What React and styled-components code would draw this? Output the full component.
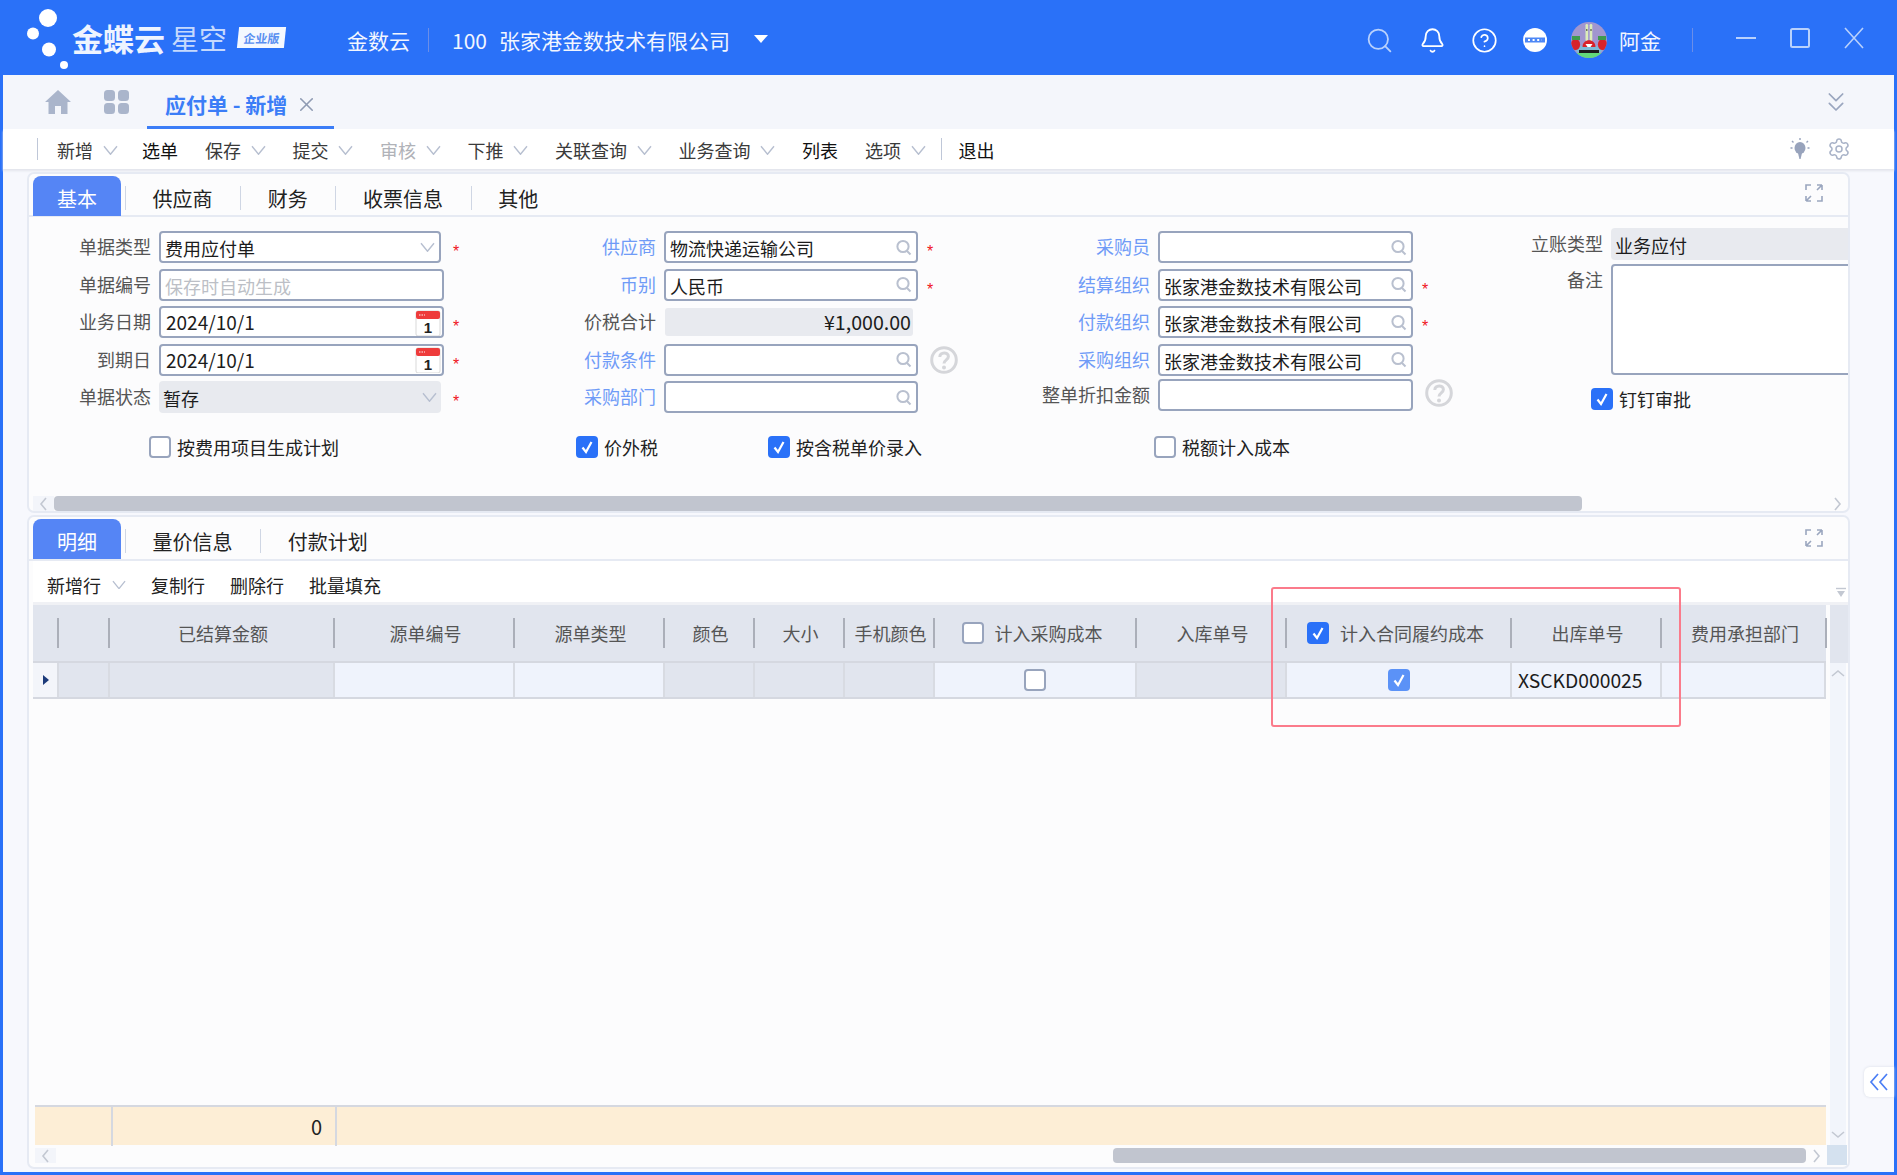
import styled, { createGlobalStyle } from "styled-components";
import { Bell, ChevronsDown, CircleHelp, Search, Settings, X } from "lucide-react";

const GlobalStyle = createGlobalStyle`
  html, body {
    margin: 0;
    height: 100%;
    overflow: hidden;
    background: #2a71f8;
  }
  * {
    box-sizing: border-box;
  }
  #root {
    font-family: "Noto Sans CJK SC", "Noto Sans", sans-serif;
    font-size: 18px;
    color: #333;
  }
`;

const HEAD_COLS = "25px 51px 225px 180px 150px 90px 90px 90px 202px 150px 225px 150px 165px";
const ROW_COLS = "26px 51px 225px 180px 150px 90px 90px 90px 202px 150px 225px 150px 164px";

function Chevron({ size = 15, color = "#b7bfd0" }) {
  return (
    <svg width={size} height={size * 0.7} viewBox="0 0 15 10" fill="none">
      <path d="M1 1 L7.5 9 L14 1" stroke={color} strokeWidth="1.4" />
    </svg>
  );
}

function Lens() {
  return (
    <svg width="16" height="17" viewBox="0 0 16 17" fill="none">
      <circle cx="7" cy="7.5" r="5.6" stroke="#b9c0cf" strokeWidth="2" />
      <path d="M11 12 L14.5 15.5" stroke="#b9c0cf" strokeWidth="2" />
    </svg>
  );
}

function CalendarIcon() {
  return (
    <svg width="26" height="26" viewBox="0 0 26 26">
      <rect x="1" y="1" width="24" height="25" rx="2" fill="#fff" stroke="#d9d9d9" />
      <rect x="1" y="1" width="24" height="8" rx="2" fill="#ee3b3b" />
      <path d="M4 5 H10" stroke="#f9b4b4" strokeWidth="1.5" strokeDasharray="1.5 1" />
      <text x="13" y="23" textAnchor="middle" fontSize="15" fontWeight="700" fill="#222" fontFamily="Liberation Sans">1</text>
    </svg>
  );
}

function HelpMark() {
  return (
    <svg width="28" height="28" viewBox="0 0 28 28" fill="none">
      <circle cx="14" cy="14" r="12.3" stroke="#d5d6da" strokeWidth="3" />
      <path d="M9.8 11 C9.8 5.6 18.4 5.6 18.4 10.6 C18.4 13.8 14 14 14 17.6" stroke="#d5d6da" strokeWidth="3" />
      <circle cx="14" cy="21.6" r="2" fill="#d5d6da" />
    </svg>
  );
}

function ExpandIcon() {
  return (
    <svg width="18" height="18" viewBox="0 0 18 18" fill="none" stroke="#9aa6bf" strokeWidth="1.6">
      <path d="M6 1 H1 V6" />
      <path d="M17 1 H12 M17 1 V6 M17 1 L12 6" />
      <path d="M1 17 H6 M1 17 V12 M1 17 L6 12" />
      <path d="M12 17 H17 V12" />
    </svg>
  );
}

function ArrowGlyph({ dir }) {
  const paths = {
    left: "M7 1 L2 7 L7 13",
    right: "M2 1 L7 7 L2 13",
    up: "M1 7 L7 2 L13 7",
    down: "M1 2 L7 7 L13 2",
  };
  const wide = dir === "up" || dir === "down";
  return (
    <svg width={wide ? 14 : 9} height={wide ? 9 : 14} viewBox={wide ? "0 0 14 9" : "0 0 9 14"} fill="none">
      <path d={paths[dir]} stroke="#c3c8d2" strokeWidth="1.6" />
    </svg>
  );
}

function CheckBox({ checked, soft }) {
  return (
    <Box $checked={checked} $soft={soft}>
      {checked && (
        <svg width="14" height="16" viewBox="0 0 14 16" fill="none">
          <path d="M2.5 8.5 L6 13 L11.5 3" stroke="#fff" strokeWidth="2.2" />
        </svg>
      )}
    </Box>
  );
}

function Logo() {
  return (
    <LogoWrap>
      <svg width="72" height="75" viewBox="0 0 72 75">
        <circle cx="48" cy="18" r="9" fill="#fff" />
        <circle cx="33" cy="33.5" r="6" fill="#fff" />
        <circle cx="49" cy="49.5" r="7" fill="#fff" />
        <circle cx="64" cy="65" r="4" fill="#fff" />
      </svg>
      <BrandName>金蝶云</BrandName>
      <BrandSub>星空</BrandSub>
      <Badge>
        <span>企业版</span>
      </Badge>
    </LogoWrap>
  );
}

function Avatar() {
  return (
    <svg width="36" height="36" viewBox="0 0 36 36">
      <defs>
        <clipPath id="avatar-clip">
          <circle cx="18" cy="18" r="18" />
        </clipPath>
      </defs>
      <g clipPath="url(#avatar-clip)">
        <rect width="36" height="36" fill="#a196cf" />
        <ellipse cx="18" cy="28" rx="13" ry="5" fill="#7fb9d6" />
        <rect x="14.5" y="2" width="2.6" height="17" rx="1.2" fill="#dcedb9" />
        <rect x="18.7" y="2" width="2.6" height="17" rx="1.2" fill="#dcedb9" />
        <circle cx="15.8" cy="8" r="0.8" fill="#222" />
        <circle cx="20" cy="8" r="0.8" fill="#222" />
        <path d="M11.5 25 C11.5 16 24.5 16 24.5 25 Z" fill="#d9212a" />
        <path d="M14.5 22 H21.5 L19.5 25 H16.5 Z" fill="#fff" />
        <ellipse cx="4.5" cy="22.5" rx="4.6" ry="5.5" fill="#d8232b" />
        <ellipse cx="31.5" cy="22.5" rx="4.6" ry="5.5" fill="#d8232b" />
        <rect x="1" y="14" width="8" height="4" fill="#3f9a4e" />
        <rect x="27" y="14" width="8" height="4" fill="#3f9a4e" />
        <rect x="8" y="28" width="20" height="3" fill="#1c1c1c" />
        <rect x="4" y="31" width="28" height="5" fill="#62d97a" />
      </g>
    </svg>
  );
}

function DotsCircle() {
  return (
    <svg width="24" height="24" viewBox="0 0 24 24">
      <circle cx="12" cy="12" r="12" fill="#fff" />
      <rect x="2" y="9.5" width="20" height="5" fill="#4d87f6" />
      <path d="M5 12 H19" stroke="#fff" strokeWidth="2" strokeDasharray="2 2.6" />
    </svg>
  );
}

function TopHeader() {
  return (
    <TopBar>
      <Logo />
      <TopText $ml={62} $size={21}>金数云</TopText>
      <TopSep $ml={18} />
      <TopText $ml={23} $size={21}>100</TopText>
      <TopText $ml={12} $size={21}>张家港金数技术有限公司</TopText>
      <Caret />
      <TopIcons>
        <Search size={29} color="#b9d1fc" strokeWidth={1.5} />
        <Bell size={27} color="#fff" strokeWidth={1.6} />
        <CircleHelp size={27} color="#fff" strokeWidth={1.5} />
        <DotsCircle />
      </TopIcons>
      <AvatarWrap>
        <Avatar />
      </AvatarWrap>
      <TopText $ml={12} $size={21}>阿金</TopText>
      <TopSep $ml={31} />
      <WindowButtons>
        <svg width="20" height="20" viewBox="0 0 20 20"><path d="M0 10 H20" stroke="#b9d1fc" strokeWidth="2" /></svg>
        <svg width="20" height="20" viewBox="0 0 20 20" fill="none"><rect x="1" y="1" width="18" height="18" rx="1.5" stroke="#b9d1fc" strokeWidth="2" /></svg>
        <svg width="20" height="22" viewBox="0 0 20 22" fill="none"><path d="M1 1 L19 21 M19 1 L1 21" stroke="#b9d1fc" strokeWidth="1.6" /></svg>
      </WindowButtons>
    </TopBar>
  );
}

function PageTabs() {
  return (
    <TabStrip>
      <svg width="26" height="24" viewBox="0 0 26 24">
        <path d="M13 0 L26 12 H22.5 V24 H16 V16 H10 V24 H3.5 V12 H0 Z" fill="#aab5cb" />
      </svg>
      <AppsIcon width="25" height="24" viewBox="0 0 25 24">
        <rect x="0" y="0" width="11" height="11" rx="3.5" fill="#aab5cb" />
        <rect x="14" y="0" width="11" height="11" rx="3.5" fill="#aab5cb" />
        <rect x="0" y="13" width="11" height="11" rx="3.5" fill="#aab5cb" />
        <rect x="14" y="13" width="11" height="11" rx="3.5" fill="#aab5cb" />
      </AppsIcon>
      <PageTab>
        应付单 - 新增
        <X size={23} color="#8f9bb3" strokeWidth={1.6} />
      </PageTab>
      <CollapseBtn>
        <ChevronsDown size={32} color="#9aa6bf" strokeWidth={1.3} />
      </CollapseBtn>
    </TabStrip>
  );
}

const tools = [
  { label: "新增", menu: true, tight: true },
  { label: "选单" },
  { label: "保存", menu: true },
  { label: "提交", menu: true },
  { label: "审核", menu: true, off: true },
  { label: "下推", menu: true },
  { label: "关联查询", menu: true },
  { label: "业务查询", menu: true },
  { label: "列表" },
  { label: "选项", menu: true },
];

function MainToolbar() {
  return (
    <Toolbar>
      <BarSep />
      <ToolGroup>
        {tools.map((t) => (
          <ToolItem key={t.label} $off={t.off} $plain={!t.menu} $tight={t.tight}>
            {t.label}
            {t.menu && <Chevron />}
          </ToolItem>
        ))}
      </ToolGroup>
      <BarSep $ml={-12} />
      <ToolItem $plain $ml={17}>退出</ToolItem>
      <ToolIcons>
        <svg width="20" height="24" viewBox="0 0 20 24" fill="none">
          <ellipse cx="10" cy="11" rx="5.5" ry="6" fill="#98a3bc" />
          <path d="M8 16 H12 L10.6 22 H9.4 Z" fill="#98a3bc" />
          <path d="M10 1 V3 M2 4 L3.5 5.5 M18 4 L16.5 5.5 M0.5 11 H2.5 M17.5 11 H19.5" stroke="#98a3bc" strokeWidth="1.4" />
        </svg>
        <Settings size={24} color="#a9b3c8" strokeWidth={1.5} />
      </ToolIcons>
    </Toolbar>
  );
}

function Tabs({ items, tall }) {
  return (
    <TabRow $tall={tall}>
      {items.map((label, i) => (
        <PanelTab key={label} $active={i === 0}>
          {label}
        </PanelTab>
      ))}
      <ExpandWrap $tall={tall}>
        <ExpandIcon />
      </ExpandWrap>
    </TabRow>
  );
}

function Field({ label, link, labelWidth, children, star, help, top }) {
  return (
    <FieldRow $top={top}>
      <FieldLabel $width={labelWidth} $link={link}>
        {label}
      </FieldLabel>
      {children}
      {star && <Star>*</Star>}
      {help && (
        <HelpWrap $up={help === "up"}>
          <HelpMark />
        </HelpWrap>
      )}
    </FieldRow>
  );
}

function LookupInput({ value, width = 254 }) {
  return (
    <Input $width={width}>
      <InputText>{value}</InputText>
      <Lens />
    </Input>
  );
}

function DateInput({ value }) {
  return (
    <Input $width={285}>
      <DateText>{value}</DateText>
      <CalendarWrap>
        <CalendarIcon />
      </CalendarWrap>
    </Input>
  );
}

function BasicForm() {
  return (
    <FormArea>
      <FormColumns>
        <FormColumn $width={468}>
          <Field label="单据类型" labelWidth={122} star>
            <Input $width={282} $mr={3}>
              <InputText>费用应付单</InputText>
              <Chevron />
            </Input>
          </Field>
          <Field label="单据编号" labelWidth={122}>
            <Input $width={285}>
              <InputText $hint>保存时自动生成</InputText>
            </Input>
          </Field>
          <Field label="业务日期" labelWidth={122} star>
            <DateInput value="2024/10/1" />
          </Field>
          <Field label="到期日" labelWidth={122} star>
            <DateInput value="2024/10/1" />
          </Field>
          <Field label="单据状态" labelWidth={122} star>
            <Input $width={282} $mr={3} $readonly>
              <InputText>暂存</InputText>
              <Chevron />
            </Input>
          </Field>
        </FormColumn>
        <FormColumn $width={501}>
          <Field label="供应商" labelWidth={159} link star>
            <LookupInput value="物流快递运输公司" />
          </Field>
          <Field label="币别" labelWidth={159} link star>
            <LookupInput value="人民币" />
          </Field>
          <Field label="价税合计" labelWidth={159}>
            <AmountBox>¥1,000.00</AmountBox>
          </Field>
          <Field label="付款条件" labelWidth={159} link help="down">
            <LookupInput />
          </Field>
          <Field label="采购部门" labelWidth={159} link>
            <LookupInput />
          </Field>
        </FormColumn>
        <FormColumn $width={461}>
          <Field label="采购员" labelWidth={152} link>
            <LookupInput width={255} />
          </Field>
          <Field label="结算组织" labelWidth={152} link star>
            <LookupInput width={255} value="张家港金数技术有限公司" />
          </Field>
          <Field label="付款组织" labelWidth={152} link star>
            <LookupInput width={255} value="张家港金数技术有限公司" />
          </Field>
          <Field label="采购组织" labelWidth={152} link>
            <LookupInput width={255} value="张家港金数技术有限公司" />
          </Field>
          <Field label="整单折扣金额" labelWidth={152} top={-2} help="up">
            <Input $width={255} />
          </Field>
        </FormColumn>
        <SideColumn>
          <Field label="立账类型" labelWidth={144}>
            <Input $width={260} $readonly>
              <InputText>业务应付</InputText>
              <Chevron />
            </Input>
          </Field>
          <NoteRow>
            <FieldLabel $width={144}>备注</FieldLabel>
            <NoteBox />
          </NoteRow>
          <NoteCheck>
            <CheckBox checked />
            钉钉审批
          </NoteCheck>
        </SideColumn>
      </FormColumns>
      <CheckRow>
        <CheckLabel>
          <CheckBox />
          按费用项目生成计划
        </CheckLabel>
        <CheckLabel>
          <CheckBox checked />
          价外税
        </CheckLabel>
        <CheckLabel>
          <CheckBox checked />
          按含税单价录入
        </CheckLabel>
        <CheckLabel>
          <CheckBox />
          税额计入成本
        </CheckLabel>
      </CheckRow>
    </FormArea>
  );
}

const headers = [
  "",
  "",
  "已结算金额",
  "源单编号",
  "源单类型",
  "颜色",
  "大小",
  "手机颜色",
  { label: "计入采购成本" },
  "入库单号",
  { label: "计入合同履约成本", checked: true },
  "出库单号",
  "费用承担部门",
];

function DetailGrid() {
  return (
    <GridArea>
      <GridMain>
        <HeaderRow>
          {headers.map((h, i) => (
            <HeaderCell key={i}>
              {typeof h === "string" ? (
                h
              ) : (
                <HeaderCheck>
                  <CheckBox checked={h.checked} />
                  {h.label}
                </HeaderCheck>
              )}
            </HeaderCell>
          ))}
        </HeaderRow>
        <DataRow>
          <RowMarker>
            <Triangle />
          </RowMarker>
          <DataCell />
          <DataCell />
          <DataCell $open />
          <DataCell $open />
          <DataCell />
          <DataCell />
          <DataCell />
          <DataCell $open $center>
            <CheckBox />
          </DataCell>
          <DataCell />
          <DataCell $open $center>
            <CheckBox checked soft />
          </DataCell>
          <DataCell $open>XSCKD000025</DataCell>
          <DataCell $open />
        </DataRow>
        <GridBlank />
        <SumRow>
          <SumCell />
          <SumCell $value>0</SumCell>
          <div />
        </SumRow>
      </GridMain>
      <VScroll>
        <VScrollHead />
        <VScrollTrack>
          <ArrowGlyph dir="up" />
          <ArrowGlyph dir="down" />
        </VScrollTrack>
      </VScroll>
    </GridArea>
  );
}

export default function App() {
  return (
    <>
      <GlobalStyle />
      <TopHeader />
      <Body>
        <PageTabs />
        <MainToolbar />
        <Panels>
          <Panel $height={341}>
            <Tabs items={["基本", "供应商", "财务", "收票信息", "其他"]} />
            <BasicForm />
            <HScroll>
              <ArrowBox>
                <ArrowGlyph dir="left" />
              </ArrowBox>
              <Thumb $width={1528} />
              <ScrollEnd>
                <ArrowGlyph dir="right" />
              </ScrollEnd>
            </HScroll>
          </Panel>
          <Panel $height={654}>
            <Tabs items={["明细", "量价信息", "付款计划"]} tall />
            <SubBar>
              <SubItem>
                新增行
                <Chevron size={14} />
              </SubItem>
              <SubItem>复制行</SubItem>
              <SubItem>删除行</SubItem>
              <SubItem>批量填充</SubItem>
              <SortIcon width="12" height="12" viewBox="0 0 12 12">
                <path d="M1 1.5 H11" stroke="#c3c8d2" strokeWidth="1.4" />
                <path d="M2 4 H10 L6 10 Z" fill="#c3c8d2" />
              </SortIcon>
            </SubBar>
            <DetailGrid />
            <BottomScroll>
              <ArrowBox $left={2}>
                <ArrowGlyph dir="left" />
              </ArrowBox>
              <Thumb $width={693} $ml={1057} />
              <BottomArrow>
                <ArrowGlyph dir="right" />
              </BottomArrow>
              <Corner />
            </BottomScroll>
            <RedMark />
          </Panel>
        </Panels>
        <SideToggle>
          <svg width="20" height="18" viewBox="0 0 20 18" fill="none" stroke="#4b7ef5" strokeWidth="1.7">
            <path d="M9 1 L2 9 L9 17" />
            <path d="M18 1 L11 9 L18 17" />
          </svg>
        </SideToggle>
      </Body>
    </>
  );
}

const TopBar = styled.header`
  display: flex;
  align-items: center;
  height: 75px;
  background: #2a71f8;
  color: #fff;
`;

const LogoWrap = styled.div`
  display: flex;
  align-items: center;
  height: 75px;
`;

const BrandName = styled.span`
  font-size: 31px;
  font-weight: 700;
  line-height: 36px;
  color: #eef4ff;
`;

const BrandSub = styled.span`
  margin-left: 6px;
  font-size: 28px;
  line-height: 36px;
  color: #c5d9fd;
`;

const Badge = styled.span`
  display: flex;
  align-items: center;
  justify-content: center;
  width: 47px;
  height: 21px;
  margin-left: 11px;
  background: #f4f8ff;
  transform: skewX(-6deg);
  font-size: 12px;
  line-height: 21px;
  font-weight: 700;
  color: #5a8ff0;
`;

const TopText = styled.span`
  margin: 4px 0 0 ${(p) => p.$ml || 0}px;
  font-size: ${(p) => p.$size || 20}px;
  line-height: 28px;
  color: #f2f6ff;
  white-space: nowrap;
`;

const TopSep = styled.span`
  width: 1px;
  height: 24px;
  margin: 4px 0 0 ${(p) => p.$ml || 0}px;
  background: #6b8ee8;
`;

const Caret = styled.span`
  margin: 2px 0 0 24px;
  border-left: 7px solid transparent;
  border-right: 7px solid transparent;
  border-top: 8px solid #fff;
`;

const TopIcons = styled.div`
  display: flex;
  align-items: center;
  gap: 25px;
  margin: 5px 0 0 auto;
`;

const AvatarWrap = styled.div`
  display: flex;
  margin: 5px 0 0 24px;
`;

const WindowButtons = styled.div`
  display: flex;
  align-items: center;
  gap: 34px;
  margin-left: 43px;
  margin-right: 33px;
`;

const Body = styled.main`
  position: relative;
  height: 1100px;
  border: 3px solid #2a71f8;
  border-top: 0;
  background: #f7f8fd;
`;

const TabStrip = styled.div`
  display: flex;
  align-items: center;
  height: 54px;
  padding-left: 42px;
  background: #f4f6fb;
`;

const AppsIcon = styled.svg`
  margin-left: 33px;
`;

const PageTab = styled.div`
  display: flex;
  align-items: center;
  gap: 8px;
  align-self: flex-end;
  height: 54px;
  margin-left: 18px;
  padding: 7px 16px 0 18px;
  border-bottom: 3px solid #3b7df7;
  color: #3b7df7;
  font-size: 21px;
  font-weight: 700;
`;

const CollapseBtn = styled.div`
  display: flex;
  margin-left: auto;
  margin-right: 42px;
`;

const Toolbar = styled.div`
  display: flex;
  align-items: center;
  height: 40px;
  background: #fff;
  box-shadow: 0 2px 2px #e3e5ec;
`;

const BarSep = styled.span`
  width: 1px;
  height: 22px;
  margin-left: ${(p) => p.$ml || 34}px;
  background: #bfc7d8;
`;

const ToolGroup = styled.div`
  display: flex;
  margin-left: 19px;
`;

const ToolItem = styled.span`
  display: flex;
  align-items: center;
  gap: 9.5px;
  margin-right: ${(p) => (p.$tight ? 24.5 : 27)}px;
  margin-left: ${(p) => p.$ml || 0}px;
  padding-top: 2px;
  line-height: 26px;
  white-space: nowrap;
  color: ${(p) => (p.$off ? "#b0b2b8" : p.$plain ? "#111" : "#3a3a3a")};
`;

const ToolIcons = styled.div`
  display: flex;
  align-items: center;
  gap: 17px;
  margin-left: auto;
  margin-right: 43px;
`;

const Panels = styled.div`
  display: flex;
  flex-direction: column;
  gap: 2px;
  width: 1823px;
  margin: 3px 0 0 24px;
`;

const Panel = styled.section`
  position: relative;
  display: flex;
  flex-direction: column;
  height: ${(p) => p.$height}px;
  border: 2px solid #e6eaf3;
  border-radius: 7px;
  background: #fcfcfd;
`;

const TabRow = styled.div`
  display: flex;
  flex-shrink: 0;
  align-items: center;
  height: ${(p) => (p.$tall ? 42 : 41)}px;
  margin-top: 2px;
  padding-left: 4px;
  border-bottom: 2px solid #e6eaf3;
`;

const PanelTab = styled.div`
  position: relative;
  align-self: flex-start;
  height: 40px;
  padding: ${(p) => (p.$active ? "0 24px" : "0 27.6px")};
  margin-right: ${(p) => (p.$active ? "4px" : "0")};
  border-radius: ${(p) => (p.$active ? "8px 8px 0 0" : "0")};
  background: ${(p) => (p.$active ? "#5585f5" : "transparent")};
  color: ${(p) => (p.$active ? "#fff" : "#222")};
  font-size: 20px;
  line-height: 45px;
  white-space: nowrap;

  ${(p) =>
    !p.$active &&
    `&::before {
      content: "";
      position: absolute;
      left: 0;
      top: 10px;
      width: 1px;
      height: 24px;
      background: #cfd6e4;
    }`}
`;

const ExpandWrap = styled.div`
  display: flex;
  margin-left: auto;
  margin-right: 25px;
  margin-top: ${(p) => (p.$tall ? -2 : -6)}px;
`;

const FormArea = styled.div`
  flex: 1;
  min-height: 0;
  overflow: hidden;
`;

const FormColumns = styled.div`
  display: flex;
  padding-top: 14px;
`;

const FormColumn = styled.div`
  display: flex;
  flex-direction: column;
  gap: 5.5px;
  flex-shrink: 0;
  width: ${(p) => p.$width}px;
`;

const SideColumn = styled.div`
  flex-shrink: 0;
  margin-top: -3px;
`;

const FieldRow = styled.div`
  display: flex;
  align-items: center;
  height: 32px;
  margin-top: ${(p) => p.$top || 0}px;
`;

const FieldLabel = styled.label`
  flex-shrink: 0;
  width: ${(p) => p.$width}px;
  margin-right: 8px;
  padding-bottom: 2px;
  text-align: right;
  line-height: 30px;
  white-space: nowrap;
  color: ${(p) => (p.$link ? "#6f9bf7" : "#555")};
`;

const Input = styled.div`
  display: flex;
  flex-shrink: 0;
  align-items: center;
  justify-content: space-between;
  width: ${(p) => p.$width}px;
  height: 32px;
  margin-right: ${(p) => p.$mr || 0}px;
  padding: 0 4px;
  border: ${(p) => (p.$readonly ? "0" : "2px solid #98a4bd")};
  border-radius: 4px;
  background: ${(p) => (p.$readonly ? "#e8eaef" : "#fff")};
`;

const InputText = styled.span`
  padding-top: 2px;
  line-height: 28px;
  white-space: nowrap;
  color: ${(p) => (p.$hint ? "#bcbfc6" : "#1c1c1c")};
`;

const DateText = styled.span`
  margin-left: 1px;
  font-size: 19px;
  line-height: 28px;
  color: #1c1c1c;
`;

const CalendarWrap = styled.span`
  display: flex;
  margin: 1px -3px 0 0;
`;

const AmountBox = styled.div`
  width: 248px;
  height: 28px;
  margin-left: 1px;
  padding-right: 2px;
  border-radius: 3px;
  background: #e8eaef;
  color: #1c1c1c;
  font-size: 19.6px;
  line-height: 28px;
  text-align: right;
`;

const Star = styled.span`
  margin: 10px 0 0 9px;
  color: #f0141e;
  font-size: 16px;
  line-height: 20px;
  font-family: "Liberation Sans", sans-serif;
`;

const HelpWrap = styled.span`
  display: flex;
  margin-left: 12px;
  margin-top: ${(p) => (p.$up ? -5 : 0)}px;
`;

const NoteRow = styled.div`
  display: flex;
  margin-top: 4px;
`;

const NoteBox = styled.div`
  width: 260px;
  height: 111px;
  border: 2px solid #98a4bd;
  border-radius: 4px;
  background: #fff;
`;

const NoteCheck = styled.div`
  display: flex;
  align-items: center;
  gap: 6px;
  margin: 13px 0 0 132px;
  line-height: 22px;
  color: #222;
`;

const CheckRow = styled.div`
  display: grid;
  grid-template-columns: 427px 192px 386px auto;
  margin-top: 23px;
  padding-left: 120px;
`;

const CheckLabel = styled.div`
  display: flex;
  align-items: center;
  gap: 6px;
  line-height: 22px;
  white-space: nowrap;
  color: #222;
`;

const Box = styled.span`
  display: inline-flex;
  flex-shrink: 0;
  align-items: center;
  justify-content: center;
  width: 22px;
  height: 22px;
  border: ${(p) => (p.$checked ? "0" : "2px solid #98a4bd")};
  border-radius: 4px;
  background: ${(p) => (!p.$checked ? "#fff" : p.$soft ? "#5b92f7" : "#2a71f8")};
`;

const HScroll = styled.div`
  display: flex;
  flex-shrink: 0;
  height: 15px;
  padding-left: 4px;
`;

const ArrowBox = styled.div`
  display: flex;
  flex-shrink: 0;
  align-items: center;
  justify-content: center;
  width: 21px;
  height: 15px;
  margin-left: ${(p) => p.$left || 0}px;
  background: #f3f5fa;
`;

const Thumb = styled.div`
  flex-shrink: 0;
  width: ${(p) => p.$width}px;
  height: 15px;
  margin-left: ${(p) => p.$ml || 0}px;
  border-radius: 4px;
  background: #c1c5cf;
`;

const ScrollEnd = styled.div`
  display: flex;
  flex: 1;
  align-items: center;
  justify-content: flex-end;
  padding-right: 6px;
`;

const SubBar = styled.div`
  display: flex;
  flex-shrink: 0;
  align-items: center;
  gap: 25px;
  height: 44px;
  margin: 0 0 0 4px;
  padding: 6px 0 0 14px;
  border-bottom: 3px solid #f0f1f5;
  background: #fff;
`;

const SubItem = styled.span`
  display: flex;
  align-items: center;
  gap: 11px;
  line-height: 26px;
  white-space: nowrap;
  color: #222;
`;

const SortIcon = styled.svg`
  align-self: flex-end;
  margin: 0 1px 3px auto;
`;

const GridArea = styled.div`
  display: flex;
  flex-shrink: 0;
  height: 540px;
  padding-left: 4px;
`;

const GridMain = styled.div`
  display: flex;
  flex-direction: column;
  width: 1793px;
`;

const HeaderRow = styled.div`
  display: grid;
  grid-template-columns: ${HEAD_COLS};
  height: 58px;
  padding-bottom: 2px;
  border-bottom: 2px solid #d5d8e0;
  background: #e1e5ee;
`;

const HeaderCell = styled.div`
  display: flex;
  align-items: center;
  justify-content: center;
  position: relative;
  padding: 2px 0 0 3px;
  color: #555;
  line-height: 26px;
  white-space: nowrap;

  &::after {
    content: "";
    position: absolute;
    right: -1px;
    top: 13px;
    width: 2px;
    height: 30px;
    background: #abafb9;
  }
`;

const HeaderCheck = styled.span`
  display: flex;
  align-items: center;
  gap: 11px;
  padding-right: 9px;
`;

const DataRow = styled.div`
  display: grid;
  grid-template-columns: ${ROW_COLS};
  height: 36px;
  border-bottom: 2px solid #d5d8e0;
`;

const RowMarker = styled.div`
  display: flex;
  align-items: center;
  padding-left: 10px;
  border-right: 2px solid #d8dbe2;
  background: #f3f5fa;
`;

const Triangle = styled.span`
  border-top: 5px solid transparent;
  border-bottom: 5px solid transparent;
  border-left: 6px solid #1c3a7a;
`;

const DataCell = styled.div`
  display: flex;
  align-items: center;
  justify-content: ${(p) => (p.$center ? "center" : "flex-start")};
  padding-left: ${(p) => (p.$center ? 0 : 6)}px;
  border-right: 2px solid #d8dbe2;
  background: ${(p) => (p.$open ? "#eff3fc" : "#e1e5ee")};
  color: #1c1c1c;
  font-size: 19.3px;
  white-space: nowrap;
`;

const GridBlank = styled.div`
  flex: 1;
`;

const SumRow = styled.div`
  display: grid;
  grid-template-columns: 78px 224px 1fr;
  height: 40px;
  margin-left: 2px;
  border-top: 2px solid #d5d8e0;
  background: #fdeed6;
`;

const SumCell = styled.div`
  padding-right: 13px;
  border-right: 2px solid #d5d8e0;
  text-align: right;
  font-size: 20px;
  line-height: 39px;
  color: #222;
`;

const VScroll = styled.div`
  display: flex;
  flex-direction: column;
  width: 22px;
  padding-left: 4px;
`;

const VScrollHead = styled.div`
  flex-shrink: 0;
  height: 58px;
  background: #e1e5ee;
`;

const VScrollTrack = styled.div`
  display: flex;
  flex: 1;
  flex-direction: column;
  align-items: center;
  justify-content: space-between;
  width: 16px;
  padding: 6px 0 6px;
  background: #f2f5fb;
`;

const BottomScroll = styled.div`
  display: flex;
  flex-shrink: 0;
  align-items: flex-start;
  height: 20px;
  padding: 0 0 0 4px;

  & > :not(:last-child) {
    margin-top: 3px;
  }
`;

const BottomArrow = styled.div`
  display: flex;
  align-items: center;
  justify-content: center;
  width: 21px;
  height: 15px;
`;

const Corner = styled.div`
  width: 20px;
  height: 20px;
  background: #d4e1ef;
`;

const RedMark = styled.div`
  position: absolute;
  left: 1242px;
  top: 70px;
  width: 410px;
  height: 140px;
  border: 2px solid #fb7b8b;
  border-radius: 3px;
  pointer-events: none;
`;

const SideToggle = styled.div`
  position: absolute;
  right: 0;
  bottom: 75px;
  display: flex;
  align-items: center;
  justify-content: center;
  width: 30px;
  height: 30px;
  border-radius: 6px 0 0 6px;
  background: #fff;
  box-shadow: 0 0 3px #d8dce6;
`;
